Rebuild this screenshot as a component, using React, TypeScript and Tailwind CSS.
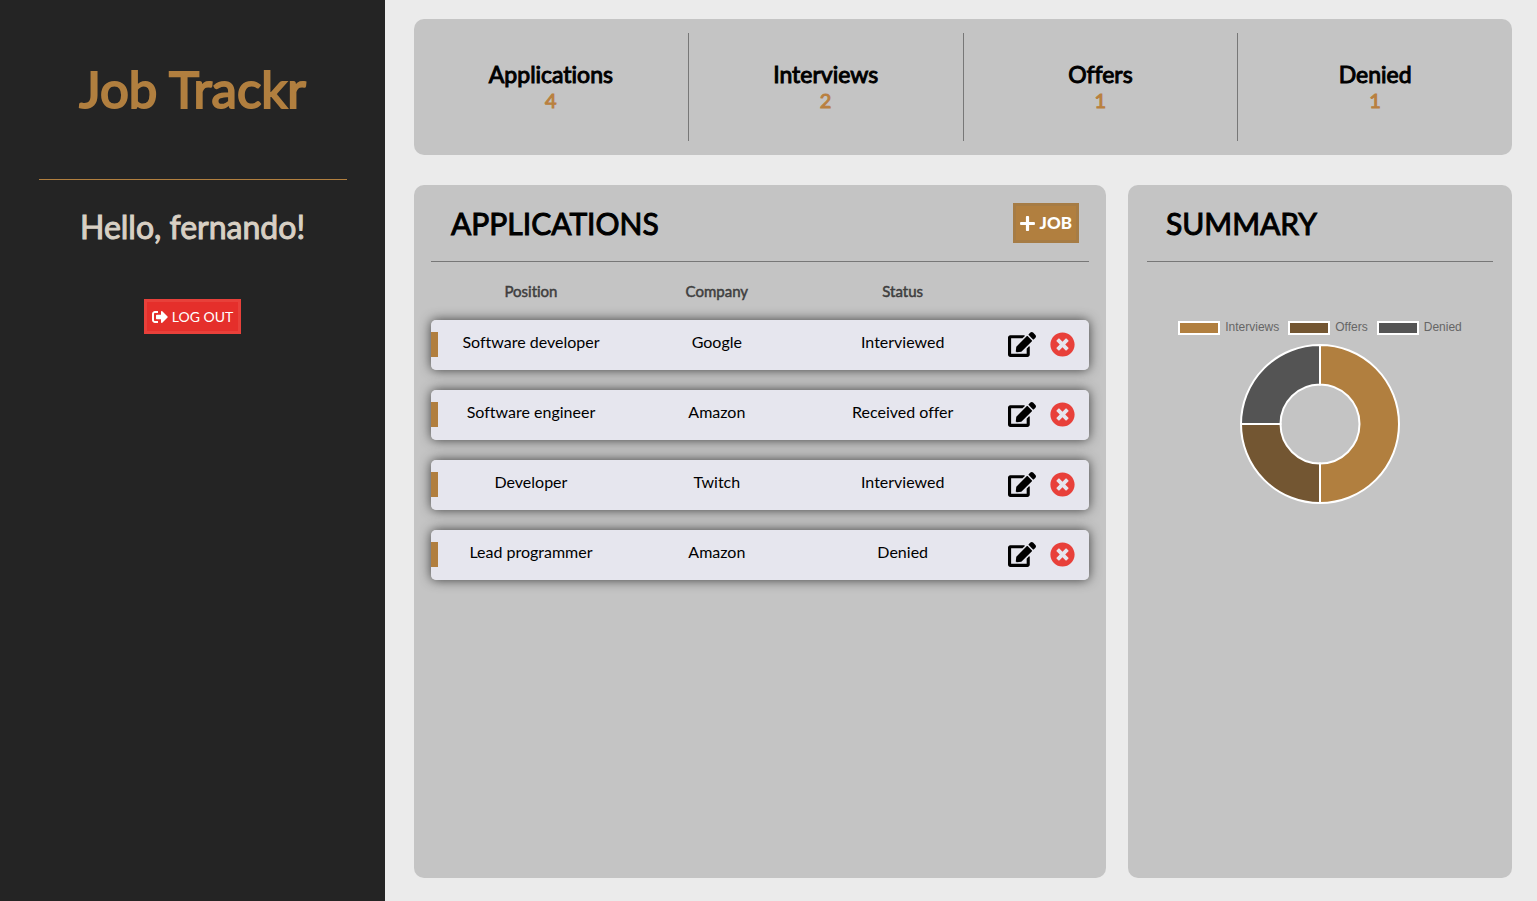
import { FaEdit, FaPlus, FaSignOutAlt, FaTimesCircle } from "react-icons/fa";

const stats = [
  { label: "Applications", value: 4 },
  { label: "Interviews", value: 2 },
  { label: "Offers", value: 1 },
  { label: "Denied", value: 1 },
];

const jobs = [
  { position: "Software developer", company: "Google", status: "Interviewed" },
  { position: "Software engineer", company: "Amazon", status: "Received offer" },
  { position: "Developer", company: "Twitch", status: "Interviewed" },
  { position: "Lead programmer", company: "Amazon", status: "Denied" },
];

function Sidebar() {
  return (
    <aside className="flex w-[25.05%] shrink-0 flex-col items-center bg-[#242424]">
      <h1 className="flex h-[180px] w-4/5 items-center justify-center border-b border-[#b17f3f] text-[51px] text-[#b17f3f] [-webkit-text-stroke:2px]">
        Job Trackr
      </h1>
      <h2 className="mt-6 text-[32px] leading-[46px] text-[#d8d0c4] [-webkit-text-stroke:1px]">Hello, fernando!</h2>
      <button
        type="button"
        className="mt-[49px] flex h-[35px] items-center gap-1 border-3 border-[#e8403a] bg-[#e52f2b] px-[5px] text-[14px] text-white"
      >
        <FaSignOutAlt className="size-4" />
        LOG OUT
      </button>
    </aside>
  );
}

function Stats() {
  return (
    <section className="flex h-[136px] rounded-[10px] bg-[#c4c4c4] py-[14px]">
      {stats.map((s) => (
        <div
          key={s.label}
          className="flex flex-1 flex-col items-center justify-center border-r border-[#777777] last:border-r-0"
        >
          <h3 className="text-[23px] leading-[26px] [-webkit-text-stroke:1px]">{s.label}</h3>
          <p className="text-[20px] leading-[26px] text-[#b9803f] [-webkit-text-stroke:1px]">{s.value}</p>
        </div>
      ))}
    </section>
  );
}

function Applications() {
  return (
    <section className="min-w-0 rounded-[10px] bg-[#c4c4c4] px-[17px]">
      <header className="flex h-[77px] items-center justify-between border-b border-[#777777] pr-[10px] pl-5">
        <h2 className="text-[30px] [-webkit-text-stroke:1px]">APPLICATIONS</h2>
        <button
          type="button"
          className="flex h-10 items-center gap-[5px] border-3 border-[#a67c45] bg-[#b17f3f] px-1 text-[17px] font-black text-white"
        >
          <FaPlus className="h-[17px] w-[15px]" />
          JOB
        </button>
      </header>
      <table className="w-full table-fixed border-separate border-spacing-x-0 border-spacing-y-5 text-center">
        <colgroup>
          <col className="w-[7px]" />
          <col className="w-[28.25%]" />
          <col className="w-[28.25%]" />
          <col className="w-[28.25%]" />
          <col />
        </colgroup>
        <thead className="text-[15px] leading-[18px] text-[#3f3f3f]">
          <tr>
            <td />
            <th className="font-normal [-webkit-text-stroke:0.5px]">Position</th>
            <th className="font-normal [-webkit-text-stroke:0.5px]">Company</th>
            <th className="font-normal [-webkit-text-stroke:0.5px]">Status</th>
            <td />
          </tr>
        </thead>
        <tbody className="text-[16px]">
          {jobs.map((job) => (
            <tr key={job.position} className="h-[50px] rounded-[5px] shadow-[0_0_12px_#3c3c3c]">
              <td className="rounded-l-[5px] bg-[#e6e6ee] p-0 pb-[2px]">
                <div className="h-[25px] bg-[#b17f3f]" />
              </td>
              <td className="bg-[#e6e6ee] p-0 pb-[7px]">{job.position}</td>
              <td className="bg-[#e6e6ee] p-0 pb-[7px]">{job.company}</td>
              <td className="bg-[#e6e6ee] p-0 pb-[7px]">{job.status}</td>
              <td className="rounded-r-[5px] bg-[#e6e6ee] p-0 pb-[2px]">
                <div className="flex items-center justify-end gap-[14px] pr-[14px]">
                  <button type="button" aria-label={`Edit ${job.position}`}>
                    <FaEdit className="h-[25px] w-[28px]" />
                  </button>
                  <button type="button" aria-label={`Delete ${job.position}`} className="text-[#e8403a]">
                    <FaTimesCircle className="size-[25px]" />
                  </button>
                </div>
              </td>
            </tr>
          ))}
        </tbody>
      </table>
    </section>
  );
}

function LegendItem({ label, swatch }: { label: string; swatch: string }) {
  return (
    <li className="flex items-center gap-[5px]">
      <span className={`h-[14px] w-[42px] border-2 border-white ${swatch}`} />
      <span className="pb-[2px]">{label}</span>
    </li>
  );
}

function Summary() {
  return (
    <section className="min-w-0 rounded-[10px] bg-[#c4c4c4] px-[19px]">
      <header className="flex h-[77px] items-center border-b border-[#777777] pl-[19px]">
        <h2 className="text-[30px] [-webkit-text-stroke:1px]">SUMMARY</h2>
      </header>
      <ul className="mt-[57px] flex justify-center gap-[9px] font-['Liberation_Sans',Arial,sans-serif] text-[12px] leading-[16px] text-[#666666]">
        <LegendItem label="Interviews" swatch="bg-[#b17f3f]" />
        <LegendItem label="Offers" swatch="bg-[#735632]" />
        <LegendItem label="Denied" swatch="bg-[#545454]" />
      </ul>
      <svg
        viewBox="0 0 160 160"
        className="mx-auto mt-[7px] size-40"
        stroke="#fff"
        strokeWidth="2"
        role="img"
        aria-label="Interviews 2, offers 1, denied 1"
      >
        <path d="M80 1A79 79 0 0 1 80 159V119.500A39.500 39.500 0 0 0 80 40.500Z" fill="#b17f3f" />
        <path d="M80 159A79 79 0 0 1 1 80H40.500A39.500 39.500 0 0 0 80 119.500Z" fill="#735632" />
        <path d="M1 80A79 79 0 0 1 80 1V40.500A39.500 39.500 0 0 0 40.500 80Z" fill="#545454" />
      </svg>
    </section>
  );
}

export default function App() {
  return (
    <div className="flex min-h-screen bg-[#ebebeb] font-['Lato',sans-serif] text-black [font-variant-ligatures:none]">
      <Sidebar />
      <main className="flex min-w-0 flex-1 flex-col gap-[30px] pt-[19px] pr-[25px] pb-[23px] pl-[29px]">
        <Stats />
        <div className="grid flex-1 grid-cols-[692fr_384fr] gap-[22px]">
          <Applications />
          <Summary />
        </div>
      </main>
    </div>
  );
}
